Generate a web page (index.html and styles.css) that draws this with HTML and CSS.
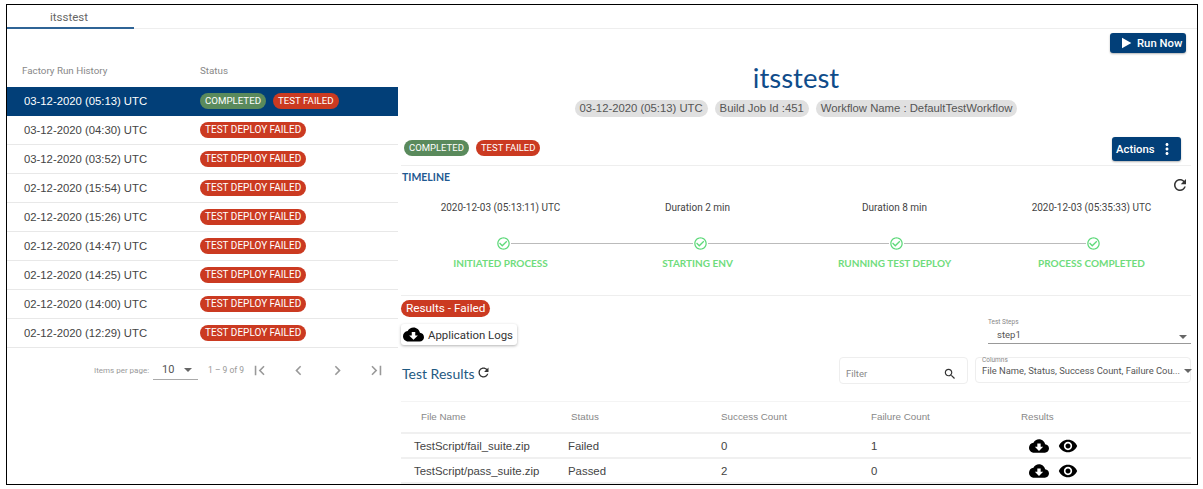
FILE: index.html
```html
<!DOCTYPE html>
<html lang="en">
<head>
    <meta charset="UTF-8">
    <title>itsstest</title>
    <link rel="stylesheet" href="styles.css">
</head>
<body>
    <svg class="icon-defs" width="0" height="0">
        <symbol id="i-cloud" viewBox="0 0 24 24"><path d="M19.35 10.04C18.67 6.59 15.64 4 12 4 9.11 4 6.6 5.64 5.35 8.04 2.34 8.36 0 10.91 0 14c0 3.31 2.69 6 6 6h13c2.76 0 5-2.24 5-5 0-2.64-2.05-4.78-4.65-4.96zM17 13l-5 5-5-5h3V9h4v4h3z"/></symbol>
        <symbol id="i-eye" viewBox="0 0 24 24"><path d="M12 4.5C7 4.5 2.73 7.61 1 12c1.73 4.39 6 7.5 11 7.5s9.27-3.11 11-7.5c-1.73-4.39-6-7.5-11-7.5zM12 17c-2.76 0-5-2.24-5-5s2.24-5 5-5 5 2.24 5 5-2.24 5-5 5zm0-8c-1.66 0-3 1.34-3 3s1.34 3 3 3 3-1.34 3-3-1.34-3-3-3z"/></symbol>
        <symbol id="i-refresh" viewBox="0 0 24 24"><path d="M17.65 6.35C16.2 4.9 14.21 4 12 4c-4.42 0-7.99 3.58-7.99 8s3.57 8 7.99 8c3.73 0 6.84-2.55 7.73-6h-2.08c-.82 2.33-3.04 4-5.65 4-3.31 0-6-2.69-6-6s2.69-6 6-6c1.66 0 3.14.69 4.22 1.78L13 11h7V4l-2.35 2.35z"/></symbol>
        <symbol id="i-check" viewBox="0 0 24 24"><path d="M16.59 7.58L10 14.17l-3.59-3.58L5 12l5 5 8-8zM12 2C6.48 2 2 6.48 2 12s4.48 10 10 10 10-4.48 10-10S17.52 2 12 2zm0 18c-4.42 0-8-3.58-8-8s3.58-8 8-8 8 3.58 8 8-3.58 8-8 8z"/></symbol>
    </svg>

    <div class="frame">
        <div class="tabbar"><div class="tab">itsstest</div></div>

        <div class="main">
            <div class="history">
                <div class="history-head">
                    <span>Factory Run History</span>
                    <span>Status</span>
                </div>
                <div class="run selected">
                    <span>03-12-2020 (05:13) UTC</span>
                    <span class="badges"><span class="badge green">COMPLETED</span><span class="badge red">TEST FAILED</span></span>
                </div>
                <div class="run"><span>03-12-2020 (04:30) UTC</span><span class="badges"><span class="badge red">TEST DEPLOY FAILED</span></span></div>
                <div class="run"><span>03-12-2020 (03:52) UTC</span><span class="badges"><span class="badge red">TEST DEPLOY FAILED</span></span></div>
                <div class="run"><span>02-12-2020 (15:54) UTC</span><span class="badges"><span class="badge red">TEST DEPLOY FAILED</span></span></div>
                <div class="run"><span>02-12-2020 (15:26) UTC</span><span class="badges"><span class="badge red">TEST DEPLOY FAILED</span></span></div>
                <div class="run"><span>02-12-2020 (14:47) UTC</span><span class="badges"><span class="badge red">TEST DEPLOY FAILED</span></span></div>
                <div class="run"><span>02-12-2020 (14:25) UTC</span><span class="badges"><span class="badge red">TEST DEPLOY FAILED</span></span></div>
                <div class="run"><span>02-12-2020 (14:00) UTC</span><span class="badges"><span class="badge red">TEST DEPLOY FAILED</span></span></div>
                <div class="run"><span>02-12-2020 (12:29) UTC</span><span class="badges"><span class="badge red">TEST DEPLOY FAILED</span></span></div>

                <div class="pager">
                    <span class="pager-label">Items per page:</span>
                    <span class="pager-select">10<i class="caret"></i></span>
                    <span class="pager-range">1 – 9 of 9</span>
                    <span class="pager-btns">
                        <svg viewBox="0 0 24 24"><path d="M18.41 16.59L13.82 12l4.59-4.59L17 6l-6 6 6 6zM6 6h2v12H6z"/></svg>
                        <svg viewBox="0 0 24 24"><path d="M15.41 7.41L14 6l-6 6 6 6 1.41-1.41L10.83 12z"/></svg>
                        <svg viewBox="0 0 24 24"><path d="M10 6L8.59 7.41 13.17 12l-4.58 4.59L10 18l6-6z"/></svg>
                        <svg viewBox="0 0 24 24"><path d="M5.59 7.41L10.18 12l-4.59 4.59L7 18l6-6-6-6zM16 6h2v12h-2z"/></svg>
                    </span>
                </div>
            </div>

            <div class="detail">
                <div class="run-row">
                    <button class="btn run-btn"><svg viewBox="0 0 24 24"><path d="M6 4v16l14-8z"/></svg>Run Now</button>
                </div>
                <h1 class="title">itsstest</h1>
                <div class="chips">
                    <span class="chip">03-12-2020 (05:13) UTC</span>
                    <span class="chip">Build Job Id :451</span>
                    <span class="chip">Workflow Name : DefaultTestWorkflow</span>
                </div>

                <div class="status-row">
                    <span class="badges"><span class="badge green">COMPLETED</span><span class="badge red">TEST FAILED</span></span>
                    <button class="btn actions-btn">Actions<svg viewBox="0 0 24 24"><path d="M12 8c1.1 0 2-.9 2-2s-.9-2-2-2-2 .9-2 2 .9 2 2 2zm0 2c-1.1 0-2 .9-2 2s.9 2 2 2 2-.9 2-2-.9-2-2-2zm0 6c-1.1 0-2 .9-2 2s.9 2 2 2 2-.9 2-2-.9-2-2-2z"/></svg></button>
                </div>

                <div class="timeline">
                    <div class="timeline-head">
                        <span class="timeline-title">TIMELINE</span>
                        <svg class="refresh"><use href="#i-refresh"/></svg>
                    </div>
                    <div class="steps-grid times">
                        <span>2020-12-03 (05:13:11) UTC</span>
                        <span>Duration 2 min</span>
                        <span>Duration 8 min</span>
                        <span>2020-12-03 (05:35:33) UTC</span>
                    </div>
                    <div class="track">
                        <svg><use href="#i-check"/></svg><i></i>
                        <svg><use href="#i-check"/></svg><i></i>
                        <svg><use href="#i-check"/></svg><i></i>
                        <svg><use href="#i-check"/></svg>
                    </div>
                    <div class="steps-grid labels">
                        <span>INITIATED PROCESS</span>
                        <span>STARTING ENV</span>
                        <span>RUNNING TEST DEPLOY</span>
                        <span>PROCESS COMPLETED</span>
                    </div>
                </div>

                <div class="results">
                    <span class="result-chip">Results - Failed</span>
                    <div class="logs-row">
                        <button class="logs-btn"><svg><use href="#i-cloud"/></svg>Application Logs</button>
                        <div class="steps-field">
                            <label>Test Steps</label>
                            <div class="steps-value">step1<i class="caret"></i></div>
                        </div>
                    </div>
                    <div class="filter-row">
                        <div class="results-title">Test Results<svg><use href="#i-refresh"/></svg></div>
                        <div class="filter-box">
                            <span>Filter</span>
                            <svg viewBox="0 0 24 24"><path d="M15.5 14h-.79l-.28-.27C15.41 12.59 16 11.11 16 9.5 16 5.91 13.09 3 9.5 3S3 5.91 3 9.5 5.91 16 9.5 16c1.61 0 3.09-.59 4.23-1.57l.27.28v.79l5 4.99L20.49 19l-4.99-5zm-6 0C7.01 14 5 11.99 5 9.5S7.01 5 9.5 5 14 7.01 14 9.5 11.99 14 9.5 14z"/></svg>
                        </div>
                        <div class="columns-box">
                            <label>Columns</label>
                            <div class="columns-value"><span>File Name, Status, Success Count, Failure Cou...</span><i class="caret"></i></div>
                        </div>
                    </div>
                    <div class="table">
                        <div class="table-row table-head">
                            <span class="first">File Name</span><span>Status</span><span>Success Count</span><span>Failure Count</span><span>Results</span>
                        </div>
                        <div class="table-row">
                            <span>TestScript/fail_suite.zip</span><span>Failed</span><span>0</span><span>1</span>
                            <span class="result-icons"><svg><use href="#i-cloud"/></svg><svg><use href="#i-eye"/></svg></span>
                        </div>
                        <div class="table-row">
                            <span>TestScript/pass_suite.zip</span><span>Passed</span><span>2</span><span>0</span>
                            <span class="result-icons"><svg><use href="#i-cloud"/></svg><svg><use href="#i-eye"/></svg></span>
                        </div>
                    </div>
                </div>
            </div>
        </div>
    </div>
</body>
</html>
```

FILE: styles.css
```css
* {
    box-sizing: border-box;
}

body {
    margin: 4px 5px 4px 6px;
    background-color: #fff;
    font-family: "Liberation Sans", Arial, sans-serif;
    color: #333;
}

.icon-defs {
    display: block;
    height: 0;
}

.frame {
    height: 481px;
    border: 1px solid #000;
    overflow: hidden;
}

/* tab strip */
.tabbar {
    height: 24px;
    border-bottom: 1px solid #eee;
}

.tab {
    width: 127px;
    height: 24px;
    border-bottom: 2px solid #2f6496;
    padding: 5px 0 0 43px;
    font-family: Roboto, sans-serif;
    font-size: 11.5px;
    line-height: 14px;
    color: #666;
}

.main {
    display: flex;
}

/* left column */
.history {
    width: 391px;
    flex-shrink: 0;
}

.history-head {
    display: grid;
    grid-template-columns: 178px 1fr;
    align-items: end;
    height: 58px;
    padding: 0 0 10px 15px;
    font-family: Roboto, sans-serif;
    font-size: 9.8px;
    line-height: 12px;
    color: #888;
}

.run {
    display: grid;
    grid-template-columns: 176px 1fr;
    align-items: center;
    height: 29px;
    padding-left: 17px;
    border-bottom: 1px solid #e8e8e8;
    font-size: 11.3px;
    color: #444;
}

.run.selected {
    background-color: #023f78;
    border-bottom-color: #023f78;
    color: #fff;
}

.badges {
    display: flex;
    gap: 7px;
}

.badge {
    height: 16px;
    padding: 0 5px;
    border-radius: 8px;
    font-family: Roboto, sans-serif;
    font-size: 9.5px;
    line-height: 16px;
    color: #fff;
    white-space: nowrap;
}

.run .badge {
    font-size: 10px;
}

.run.selected .badge {
    font-size: 9.7px;
}

.green {
    background-color: #5a8a5c;
}

.red {
    background-color: #cb3a21;
}

.pager {
    display: flex;
    align-items: center;
    height: 26px;
    margin-top: 9px;
    padding-left: 87px;
    font-family: Roboto, sans-serif;
    font-size: 8px;
    color: #999;
}

.pager-label {
    width: 59px;
}

.pager-select {
    display: flex;
    align-items: center;
    justify-content: space-between;
    width: 45px;
    height: 20px;
    padding: 0 6px 0 9px;
    border-bottom: 1px solid #aaa;
    font-size: 11px;
    color: #555;
}

.caret {
    display: inline-block;
    width: 0;
    height: 0;
    border-left: 4px solid transparent;
    border-right: 4px solid transparent;
    border-top: 4px solid #666;
}

.pager-range {
    width: 42px;
    margin-left: 10px;
    font-size: 8.5px;
}

.pager-btns {
    display: flex;
    gap: 20px;
}

.pager-btns svg {
    width: 19px;
    height: 19px;
    fill: #999;
}

/* right column */
.detail {
    flex: 1;
    min-width: 0;
    padding: 4px 6px 0 3px;
}

.run-row {
    display: flex;
    justify-content: flex-end;
    padding-right: 5px;
}

.btn {
    display: flex;
    align-items: center;
    border: none;
    border-radius: 3px;
    background-color: #023f78;
    color: #fff;
    font-family: Roboto, sans-serif;
    font-weight: 500;
    font-size: 11.3px;
    box-shadow: 0 1px 2px rgba(0,0,0,0.3);
}

.run-btn {
    gap: 3px;
    width: 76px;
    height: 20px;
    padding: 0 0 0 8px;
}

.run-btn svg {
    width: 16px;
    height: 16px;
    fill: #fff;
}

.title {
    margin: 10px 0 0;
    font-family: Lato, sans-serif;
    font-weight: 400;
    font-size: 27.5px;
    line-height: 30px;
    color: #0f4c8a;
    text-align: center;
}

.chips {
    display: flex;
    justify-content: center;
    gap: 7px;
    margin-top: 7px;
}

.chip {
    height: 17px;
    padding: 0 5px;
    border-radius: 9px;
    background-color: #e0e0e0;
    font-size: 11.3px;
    line-height: 17px;
    color: #555;
}

.status-row {
    display: flex;
    align-items: center;
    justify-content: space-between;
    height: 24px;
    margin-top: 20px;
    padding: 0 10px 0 3px;
}

.status-row .badges {
    margin-top: -2px;
}

.actions-btn {
    justify-content: space-between;
    width: 69px;
    height: 24px;
    padding: 0 5px 0 4px;
}

.actions-btn svg {
    width: 18px;
    height: 18px;
    fill: #fff;
}

.timeline {
    margin-top: 4px;
    height: 131px;
    border-top: 1px solid #eee;
    border-bottom: 1px solid #eee;
}

.timeline-head {
    display: flex;
    justify-content: space-between;
    height: 28px;
    padding: 5px 2px 0 1px;
}

.timeline-title {
    font-family: Lato, sans-serif;
    font-weight: 700;
    font-size: 10.5px;
    line-height: 12px;
    color: #1f5a92;
}

.refresh {
    width: 18px;
    height: 18px;
    margin-top: 5px;
    fill: #333;
}

.steps-grid {
    display: grid;
    grid-template-columns: repeat(4, 197px);
    padding-left: 1px;
    text-align: center;
}

.times {
    margin-top: 7px;
    font-family: Roboto, sans-serif;
    font-size: 10px;
    line-height: 14px;
    color: #444;
}

.track {
    display: flex;
    align-items: center;
    height: 14px;
    margin: 21px 0 0 95px;
    width: 605px;
}

.track svg {
    width: 15px;
    height: 15px;
    flex-shrink: 0;
    fill: #5ed97a;
}

.track i {
    flex: 1;
    height: 1px;
    background-color: #bbb;
}

.labels {
    margin-top: 7px;
    font-family: Lato, sans-serif;
    font-weight: 700;
    font-size: 10px;
    line-height: 12px;
    color: #6fdc7c;
}

/* results */
.results {
    padding-top: 4px;
}

.result-chip {
    display: inline-block;
    height: 17px;
    padding: 0 5px;
    border-radius: 9px;
    background-color: #cb3a21;
    font-family: Roboto, sans-serif;
    font-size: 11.8px;
    line-height: 17px;
    color: #fff;
    vertical-align: top;
}

.logs-row {
    display: flex;
    align-items: flex-end;
    justify-content: space-between;
    margin-top: 0;
    height: 28px;
}

.logs-btn {
    display: flex;
    align-items: center;
    gap: 4px;
    width: 116px;
    height: 21px;
    margin-bottom: 1px;
    padding: 0 0 0 2px;
    border: none;
    border-radius: 3px;
    background-color: #fff;
    font-family: Roboto, sans-serif;
    font-size: 11.4px;
    color: #333;
    box-shadow: 0 1px 3px rgba(0,0,0,0.3);
}

.logs-btn svg {
    width: 21px;
    height: 21px;
}

.steps-field {
    width: 203px;
    margin-bottom: 2px;
}

.steps-field label {
    display: block;
    font-family: Roboto, sans-serif;
    font-size: 6.5px;
    line-height: 8px;
    color: #888;
}

.steps-value {
    display: flex;
    align-items: center;
    justify-content: space-between;
    height: 18px;
    padding: 0 4px 0 9px;
    border-bottom: 1px solid #999;
    font-family: Roboto, sans-serif;
    font-size: 9.5px;
    color: #555;
}

.steps-value .caret {
    margin-top: 5px;
}

.filter-row {
    display: flex;
    align-items: flex-start;
    gap: 7px;
    height: 27px;
    margin-top: 11px;
}

.results-title {
    display: flex;
    align-items: center;
    flex: 1;
    height: 27px;
    padding: 6px 0 0 1px;
    font-family: Lato, sans-serif;
    font-size: 14px;
    color: #1f5a82;
}

.results-title svg {
    width: 15px;
    height: 15px;
    margin: -3px 0 0 1px;
    fill: #333;
}

.filter-box {
    display: flex;
    align-items: center;
    justify-content: space-between;
    width: 129px;
    height: 27px;
    padding: 6px 10px 0 6px;
    border: 1px solid #eee;
    border-radius: 4px;
    font-family: Roboto, sans-serif;
    font-size: 9.5px;
    color: #888;
}

.filter-box svg {
    width: 14px;
    height: 14px;
    fill: #333;
}

.columns-box {
    width: 216px;
    height: 26px;
    padding: 0 6px;
    border: 1px solid #eee;
    border-radius: 4px;
    font-family: Roboto, sans-serif;
}

.columns-box label {
    display: block;
    margin-top: -2px;
    font-size: 6.5px;
    line-height: 8px;
    color: #888;
}

.columns-value {
    display: flex;
    align-items: center;
    gap: 4px;
    font-size: 9.4px;
    line-height: 13px;
    color: #555;
    white-space: nowrap;
}

.table {
    margin-top: 17px;
}

.table-row {
    display: grid;
    grid-template-columns: 154px 153px 150px 150px 1fr;
    align-items: center;
    height: 25px;
    padding-left: 13px;
    border-bottom: 2px solid #f0f0f0;
    font-size: 11.4px;
    color: #444;
}

.table-head {
    height: 33px;
    padding: 0 0 2px;
    grid-template-columns: 170px 150px 150px 150px 1fr;
    border-top: 1px solid #f4f4f4;
    font-size: 9.8px;
    color: #888;
}

.table-head .first {
    padding-left: 20px;
}

.result-icons {
    display: flex;
    gap: 9px;
    padding-left: 8px;
}

.result-icons svg {
    width: 20px;
    height: 20px;
}
```
